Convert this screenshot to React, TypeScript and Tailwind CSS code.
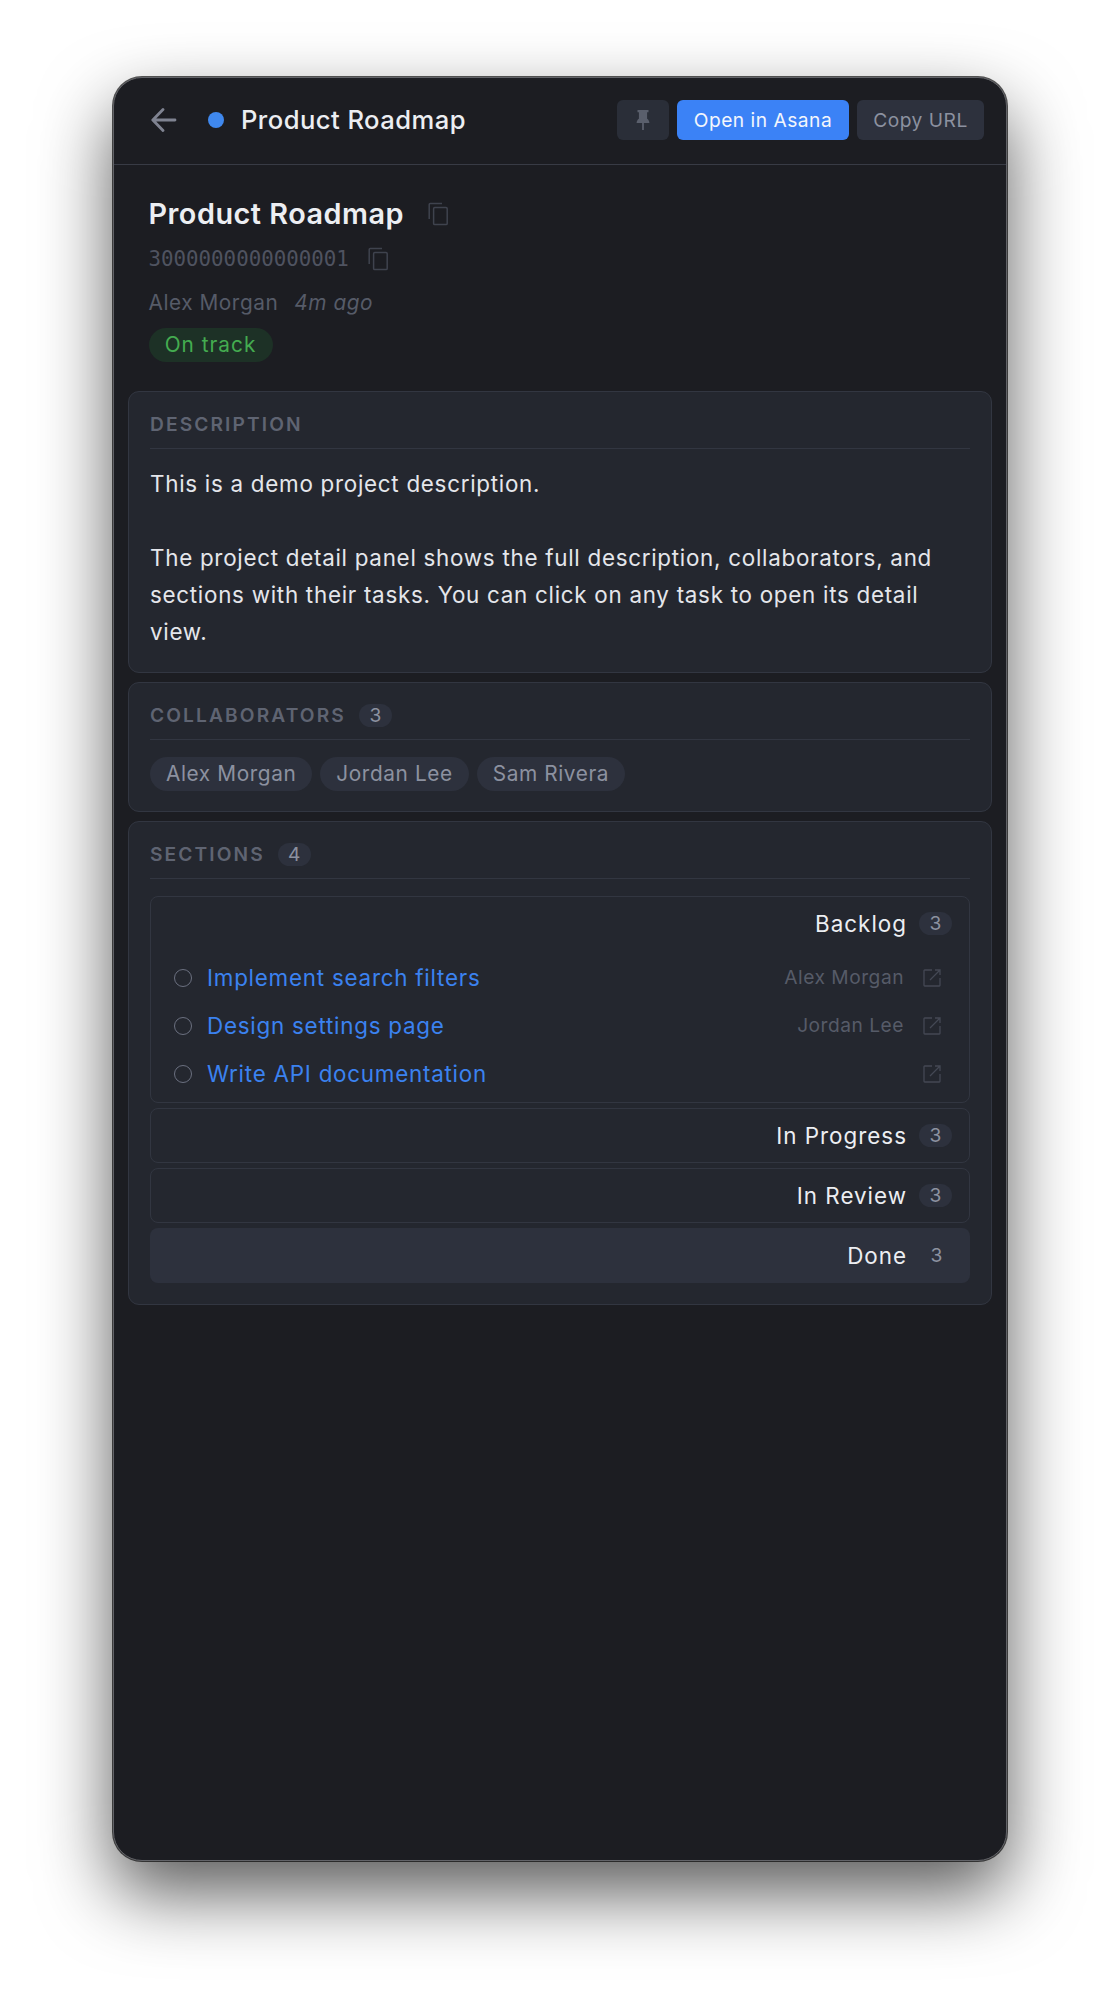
import React from "react";

const CopyIcon = ({ className }: { className: string }) => (
  <svg viewBox="0 0 24 24" fill="none" stroke="currentColor" strokeWidth="1.5" className={className}>
    <rect x="7.6" y="5.6" width="13.6" height="17" rx="1.2" />
    <path d="M3.2 17V2.6c0-.6.4-1 1-1H16" />
  </svg>
);

const PinIcon = () => (
  <svg viewBox="0 0 24 24" fill="currentColor" className="h-[24px] w-[24px] text-[#5a5f6c]">
    <path d="M6.5 2h11v2.2h-1.4v6.6c1.6 1 2.2 2.6 2.3 4.2h-5.5v7h-1.8v-7H5.6c.1-1.6.7-3.2 2.3-4.2V4.2H6.5z" />
  </svg>
);

const ExtIcon = () => (
  <svg viewBox="0 0 18 18" fill="none" stroke="currentColor" strokeWidth="1.3" className="h-[18px] w-[18px] text-[#444854]">
    <path d="M9 1H1.7a.7.7 0 0 0-.7.7v14.6c0 .4.3.7.7.7h14.6c.4 0 .7-.3.7-.7V9" />
    <path d="M7 11 17 1M12 1h5v5" />
  </svg>
);

const Count = ({ n, plain }: { n: number; plain?: boolean }) => (
  <span className={`flex h-[23px] w-[33px] items-center justify-center rounded-full text-[19.2px] text-[#8c91a0] ${plain ? "" : "bg-[#2d313d]"}`}>{n}</span>
);

const SectionTitle = ({ title, n }: { title: string; n?: number }) => (
  <div className="flex h-[40px] items-center gap-[13px] border-b border-[#323641] pb-[9px]">
    <span className="text-[19.2px] font-semibold tracking-[2.1px] text-[#5f6472]">{title}</span>
    {n !== undefined && <Count n={n} />}
  </div>
);

const Task = ({ title, who }: { title: string; who?: string }) => (
  <div className="flex h-[48px] items-center pl-[23px] pr-[28px]">
    <span className="h-[18px] w-[18px] rounded-full border-[1.6px] border-[#6b7080]" />
    <span className="ml-[15px] flex-1 text-[22.4px] tracking-[0.76px] text-[#3b82f0]">{title}</span>
    {who && <span className="text-[19.2px] tracking-[0.5px] text-[#565b68]">{who}</span>}
    <span className="ml-[19px] flex"><ExtIcon /></span>
  </div>
);

const Head = ({ title }: { title: string }) => (
  <div className="flex items-center justify-end gap-[12px] pr-[17px]">
    <span className="text-[22.4px] tracking-[1px] text-[#eceef2]">{title}</span>
    <Count n={3} />
  </div>
);

export default function App() {
  return (
    <div className="h-[2010px] w-[1120px] overflow-hidden bg-white pl-[113px] pt-[77px] font-['Inter',sans-serif]">
      <div className="h-[1784px] w-[894px] overflow-hidden rounded-[29px] border border-[#626368] bg-[#1c1d22] shadow-[0_0_0_1px_rgba(0,0,0,0.65),0_32px_72px_rgba(0,0,0,0.65)]">
        <div className="flex h-[87px] items-center border-b border-[#383b45] pb-[2px] pr-[22px]">
          <span className="ml-[37px] flex text-[#7f8391]">
            <svg viewBox="0 0 26 26" fill="none" stroke="currentColor" strokeWidth="2.8" strokeLinecap="round" strokeLinejoin="round" className="h-[26px] w-[26px]">
              <path d="M24 13H2M12 2.5 1.8 13 12 23.5" />
            </svg>
          </span>
          <span className="ml-[31px] h-[16px] w-[16px] rounded-full bg-[#3f88ee]" />
          <span className="ml-[17px] mt-[1px] flex-1 text-[25.6px] font-medium tracking-[0.45px] text-[#eceef2]">Product Roadmap</span>
          <div className="flex gap-[8px]">
            <button className="flex h-[40px] w-[52px] items-center justify-center rounded-[6px] bg-[#2a2e38]"><PinIcon /></button>
            <button className="h-[40px] w-[172px] rounded-[6px] bg-[#3b82f6] text-[19.2px] tracking-[0.5px] text-[#f3f6fc]">Open in Asana</button>
            <button className="h-[40px] w-[127px] rounded-[6px] bg-[#2d313d] text-[19.2px] tracking-[0.5px] text-[#8c91a0]">Copy URL</button>
          </div>
        </div>

        <div className="pl-[34.5px] pr-[35px] pt-[31px]">
          <div className="flex items-center gap-[22px]">
            <h1 className="text-[28.8px] font-semibold leading-[36px] tracking-[0.5px] text-[#eceef2]">Product Roadmap</h1>
            <CopyIcon className="h-[24px] w-[24px] text-[#3f434e]" />
          </div>
          <div className="mt-[14px] flex items-center gap-[17px]">
            <span className="font-['DejaVu_Sans_Mono',monospace] text-[20.8px] leading-[26px] text-[#4f5360]">3000000000000001</span>
            <CopyIcon className="h-[24px] w-[24px] text-[#3f434e]" />
          </div>
          <div className="mt-[18px] flex items-center gap-[16px] text-[20.8px] leading-[26px] tracking-[0.55px] text-[#565b68]">
            <span>Alex Morgan</span>
            <span className="italic">4m ago</span>
          </div>
          <div className="mt-[12px] flex h-[34px] w-[124px] items-center justify-center rounded-full bg-[#1d3126] text-[20.8px] tracking-[1px] text-[#44ac50]">On track</div>
        </div>

        <div className="mt-[29px] flex flex-col gap-[9px] px-[14px]">
          <section className="rounded-[11px] border border-[#323641] bg-[#24272f] px-[21px] pb-[22px] pt-[17px]">
            <SectionTitle title="DESCRIPTION" />
            <p className="mt-[16px] text-[22.4px] leading-[37px] tracking-[0.72px] text-[#e4e6eb]">
              This is a demo project description.<br /><br />
              The project detail panel shows the full description, collaborators, and sections with their tasks. You can click on any task to open its detail view.
            </p>
          </section>

          <section className="rounded-[11px] border border-[#323641] bg-[#24272f] px-[21px] pb-[20px] pt-[17px]">
            <SectionTitle title="COLLABORATORS" n={3} />
            <div className="mt-[17px] flex gap-[8px]">
              {["Alex Morgan", "Jordan Lee", "Sam Rivera"].map((c) => (
                <span key={c} className="flex h-[34px] items-center rounded-full bg-[#2d313d] px-[16px] text-[20.8px] tracking-[0.6px] text-[#8c91a0]">{c}</span>
              ))}
            </div>
          </section>

          <section className="rounded-[11px] border border-[#323641] bg-[#24272f] px-[21px] pb-[21px] pt-[17px]">
            <SectionTitle title="SECTIONS" n={4} />
            <div className="mt-[17px] flex flex-col gap-[5px]">
              <div className="h-[207px] rounded-[8px] border border-[#323641] pt-[10px]">
                <Head title="Backlog" />
                <div className="mt-[13px]">
                  <Task title="Implement search filters" who="Alex Morgan" />
                  <Task title="Design settings page" who="Jordan Lee" />
                  <Task title="Write API documentation" />
                </div>
              </div>
              <div className="flex h-[55px] items-center justify-end rounded-[8px] border border-[#323641]"><div className="w-full"><Head title="In Progress" /></div></div>
              <div className="flex h-[55px] items-center justify-end rounded-[8px] border border-[#323641]"><div className="w-full"><Head title="In Review" /></div></div>
              <div className="flex h-[55px] items-center justify-end rounded-[8px] bg-[#2d313d]">
                <div className="flex w-full items-center justify-end gap-[13px] pr-[17px]">
                  <span className="text-[22.4px] tracking-[1px] text-[#eceef2]">Done</span>
                  <Count n={3} plain />
                </div>
              </div>
            </div>
          </section>
        </div>
      </div>
    </div>
  );
}
